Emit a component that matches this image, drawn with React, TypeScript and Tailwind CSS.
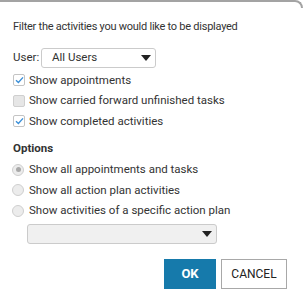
import React from "react";

function Caret() {
  return (
    <svg width="10" height="6" viewBox="0 0 10 6" className="ml-auto">
      <path d="M0 0 L10 0 L5 6 Z" fill="#222" />
    </svg>
  );
}

function Check({ checked, label }: { checked: boolean; label: string }) {
  return (
    <div className="flex h-[20.5px] items-center gap-1">
      <div
        className={
          checked
            ? "flex h-3 w-3 items-center justify-center rounded-[2px] border border-[#c4c4c4] bg-white"
            : "h-3 w-3 rounded-[2px] border border-[#cfcfcf] bg-[#e6e6e6]"
        }
      >
        {checked && (
          <svg width="9" height="8" viewBox="0 0 9 8">
            <path d="M1 4.2 L3.4 6.4 L8 1.4" fill="none" stroke="#3a8fd8" strokeWidth="1.4" />
          </svg>
        )}
      </div>
      <span>{label}</span>
    </div>
  );
}

function Radio({ selected, label }: { selected: boolean; label: string }) {
  return (
    <div className="flex h-[20.5px] items-center gap-[5px]">
      <div className="-ml-px flex h-3 w-3 items-center justify-center rounded-full border border-[#cfcfcf] bg-[#ececec]">
        {selected && <div className="h-[5px] w-[5px] rounded-full bg-[#a8a8a8]" />}
      </div>
      <span>{label}</span>
    </div>
  );
}

export default function App() {
  return (
    <div className="h-[302px] w-[303px] overflow-hidden bg-white font-['Roboto',sans-serif] text-[11.5px] text-[#333]">
      <div className="h-2 rounded-tr-[9px] border-t-2 border-r-2 border-[#a3a3a3]" />
      <div className="px-[13px]">
        <p className="mt-[11px] whitespace-nowrap text-[11px] leading-4 tracking-[-0.25px]">Filter the activities you would like to be displayed</p>
        <div className="mt-[13px] flex h-5 items-center">
          <span className="w-[28px]">User:</span>
          <div className="flex h-5 w-[115px] items-center rounded-[3px] border border-[#cbcbcb] pl-[10px] pr-[4px]">
            <span>All Users</span>
            <Caret />
          </div>
        </div>
        <div className="mt-[2px] flex flex-col">
          <Check checked label="Show appointments" />
          <Check checked={false} label="Show carried forward unfinished tasks" />
          <Check checked label="Show completed activities" />
        </div>
        <p className="mt-2 font-bold leading-4 text-[#333]">Options</p>
        <div className="mt-1 flex flex-col">
          <Radio selected label="Show all appointments and tasks" />
          <Radio selected={false} label="Show all action plan activities" />
          <Radio selected={false} label="Show activities of a specific action plan" />
        </div>
        <div className="ml-[14px] mt-[3px] flex h-5 w-[190px] items-center rounded-[3px] border border-[#cbcbcb] bg-[#f0f0f0] pr-[4px]">
          <Caret />
        </div>
        <div className="mr-[3px] mt-[15px] flex justify-end gap-[5px]">
          <button className="h-[30px] w-[52px] bg-[#167aab] text-[13px] font-bold text-white">OK</button>
          <button className="h-[30px] w-[66px] border border-[#a8a8a8] bg-white text-[12px] text-[#222]">CANCEL</button>
        </div>
      </div>
    </div>
  );
}
